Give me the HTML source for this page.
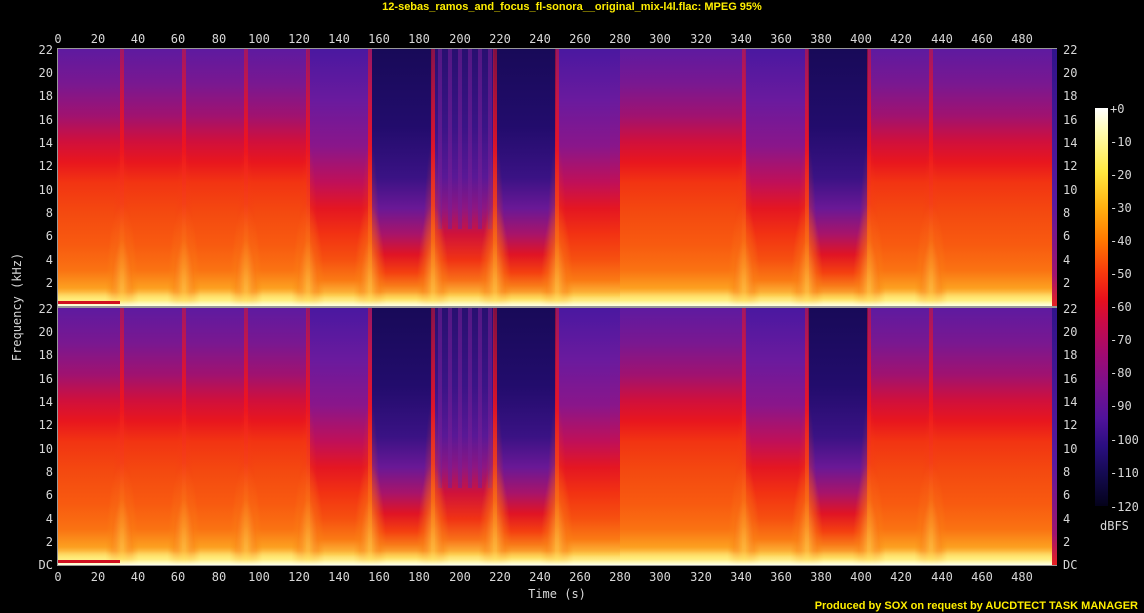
<!DOCTYPE html>
<html><head><meta charset="utf-8"><style>
html,body{margin:0;padding:0;background:#000;width:1144px;height:613px;overflow:hidden;position:relative;font-family:"DejaVu Sans Mono","Liberation Mono",monospace;}
.t{position:absolute;color:#d8d8d8;font-size:12px;line-height:12px;white-space:nowrap;}
.c{transform:translate(-50%,0);}
.r{transform:translate(-100%,-50%);}
.l{transform:translate(0,-50%);}
.ch{position:absolute;left:58px;width:999px;height:257px;overflow:hidden;background:#000;}
.seg{position:absolute;top:0;height:100%;}
</style></head><body>
<div style="position:absolute;top:1px;left:0;width:1144px;text-align:center;color:#ffee00;font:bold 11px 'Liberation Sans',sans-serif;">12-sebas_ramos_and_focus_fl-sonora__original_mix-l4l.flac: MPEG 95%</div>
<div style="position:absolute;top:48px;left:57px;width:1000px;height:518px;border:1px solid #999;background:#999;box-sizing:border-box;"></div>
<div class="ch" id="c1" style="top:49px"></div>
<div class="ch" id="c2" style="top:308px"></div>

<span class="t c" style="top:33px;left:58px">0</span><span class="t c" style="top:33px;left:98px">20</span><span class="t c" style="top:33px;left:138px">40</span><span class="t c" style="top:33px;left:178px">60</span><span class="t c" style="top:33px;left:219px">80</span><span class="t c" style="top:33px;left:259px">100</span><span class="t c" style="top:33px;left:299px">120</span><span class="t c" style="top:33px;left:339px">140</span><span class="t c" style="top:33px;left:379px">160</span><span class="t c" style="top:33px;left:419px">180</span><span class="t c" style="top:33px;left:460px">200</span><span class="t c" style="top:33px;left:500px">220</span><span class="t c" style="top:33px;left:540px">240</span><span class="t c" style="top:33px;left:580px">260</span><span class="t c" style="top:33px;left:620px">280</span><span class="t c" style="top:33px;left:660px">300</span><span class="t c" style="top:33px;left:701px">320</span><span class="t c" style="top:33px;left:741px">340</span><span class="t c" style="top:33px;left:781px">360</span><span class="t c" style="top:33px;left:821px">380</span><span class="t c" style="top:33px;left:861px">400</span><span class="t c" style="top:33px;left:901px">420</span><span class="t c" style="top:33px;left:942px">440</span><span class="t c" style="top:33px;left:982px">460</span><span class="t c" style="top:33px;left:1022px">480</span>
<span class="t c" style="top:571px;left:58px">0</span><span class="t c" style="top:571px;left:98px">20</span><span class="t c" style="top:571px;left:138px">40</span><span class="t c" style="top:571px;left:178px">60</span><span class="t c" style="top:571px;left:219px">80</span><span class="t c" style="top:571px;left:259px">100</span><span class="t c" style="top:571px;left:299px">120</span><span class="t c" style="top:571px;left:339px">140</span><span class="t c" style="top:571px;left:379px">160</span><span class="t c" style="top:571px;left:419px">180</span><span class="t c" style="top:571px;left:460px">200</span><span class="t c" style="top:571px;left:500px">220</span><span class="t c" style="top:571px;left:540px">240</span><span class="t c" style="top:571px;left:580px">260</span><span class="t c" style="top:571px;left:620px">280</span><span class="t c" style="top:571px;left:660px">300</span><span class="t c" style="top:571px;left:701px">320</span><span class="t c" style="top:571px;left:741px">340</span><span class="t c" style="top:571px;left:781px">360</span><span class="t c" style="top:571px;left:821px">380</span><span class="t c" style="top:571px;left:861px">400</span><span class="t c" style="top:571px;left:901px">420</span><span class="t c" style="top:571px;left:942px">440</span><span class="t c" style="top:571px;left:982px">460</span><span class="t c" style="top:571px;left:1022px">480</span>
<span class="t r" style="top:50px;left:53px">22</span><span class="t r" style="top:73px;left:53px">20</span><span class="t r" style="top:96px;left:53px">18</span><span class="t r" style="top:120px;left:53px">16</span><span class="t r" style="top:143px;left:53px">14</span><span class="t r" style="top:166px;left:53px">12</span><span class="t r" style="top:190px;left:53px">10</span><span class="t r" style="top:213px;left:53px">8</span><span class="t r" style="top:236px;left:53px">6</span><span class="t r" style="top:260px;left:53px">4</span><span class="t r" style="top:283px;left:53px">2</span>
<span class="t r" style="top:309px;left:53px">22</span><span class="t r" style="top:332px;left:53px">20</span><span class="t r" style="top:355px;left:53px">18</span><span class="t r" style="top:379px;left:53px">16</span><span class="t r" style="top:402px;left:53px">14</span><span class="t r" style="top:425px;left:53px">12</span><span class="t r" style="top:449px;left:53px">10</span><span class="t r" style="top:472px;left:53px">8</span><span class="t r" style="top:495px;left:53px">6</span><span class="t r" style="top:519px;left:53px">4</span><span class="t r" style="top:542px;left:53px">2</span><span class="t r" style="top:565px;left:53px">DC</span>
<span class="t l" style="top:50px;left:1063px">22</span><span class="t l" style="top:73px;left:1063px">20</span><span class="t l" style="top:96px;left:1063px">18</span><span class="t l" style="top:120px;left:1063px">16</span><span class="t l" style="top:143px;left:1063px">14</span><span class="t l" style="top:166px;left:1063px">12</span><span class="t l" style="top:190px;left:1063px">10</span><span class="t l" style="top:213px;left:1063px">8</span><span class="t l" style="top:236px;left:1063px">6</span><span class="t l" style="top:260px;left:1063px">4</span><span class="t l" style="top:283px;left:1063px">2</span>
<span class="t l" style="top:309px;left:1063px">22</span><span class="t l" style="top:332px;left:1063px">20</span><span class="t l" style="top:355px;left:1063px">18</span><span class="t l" style="top:379px;left:1063px">16</span><span class="t l" style="top:402px;left:1063px">14</span><span class="t l" style="top:425px;left:1063px">12</span><span class="t l" style="top:449px;left:1063px">10</span><span class="t l" style="top:472px;left:1063px">8</span><span class="t l" style="top:495px;left:1063px">6</span><span class="t l" style="top:519px;left:1063px">4</span><span class="t l" style="top:542px;left:1063px">2</span><span class="t l" style="top:565px;left:1063px">DC</span>

<span class="t c" style="top:588px;left:557px">Time (s)</span>
<span class="t" style="top:307px;left:17px;transform:translate(-50%,-50%) rotate(-90deg)">Frequency (kHz)</span>

<div style="position:absolute;left:1095px;top:108px;width:13px;height:398px;background:linear-gradient(#ffffff 0%,#fffbb0 6%,#ffe840 16%,#ffb010 25%,#ff7a00 33%,#f83c0c 41%,#e8101c 48%,#c80a48 54%,#a00a72 62%,#78108e 70%,#50129a 78%,#2a0e80 85%,#140a50 92%,#04021a 100%);"></div>
<span class="t l" style="top:109px;left:1110px">+0</span><span class="t l" style="top:142px;left:1110px">-10</span><span class="t l" style="top:175px;left:1110px">-20</span><span class="t l" style="top:208px;left:1110px">-30</span><span class="t l" style="top:241px;left:1110px">-40</span><span class="t l" style="top:274px;left:1110px">-50</span><span class="t l" style="top:307px;left:1110px">-60</span><span class="t l" style="top:340px;left:1110px">-70</span><span class="t l" style="top:373px;left:1110px">-80</span><span class="t l" style="top:406px;left:1110px">-90</span><span class="t l" style="top:440px;left:1110px">-100</span><span class="t l" style="top:473px;left:1110px">-110</span><span class="t l" style="top:507px;left:1110px">-120</span>
<span class="t" style="top:520px;left:1100px">dBFS</span>

<div style="position:absolute;bottom:1px;right:6px;color:#ffee00;font:bold 11px 'Liberation Sans',sans-serif;">Produced by SOX on request by AUCDTECT TASK MANAGER</div>

<script>
var G={
n:"linear-gradient(#5e1aa0 0%,#7a1890 14%,#a01270 26%,#d0103c 36%,#e8161e 44%,#f23412 52%,#f44a10 64%,#f85a10 76%,#fa7212 86%,#fca020 93%,#ffe070 97%,#fffff0 100%)",
s:"linear-gradient(#4a18a0 0%,#6a1a9e 20%,#8a168a 38%,#c01058 52%,#e41622 62%,#f23212 72%,#f65010 82%,#fa7a14 90%,#fdc040 96%,#fffff0 100%)",
q:"linear-gradient(#180a58 0%,#220c6c 30%,#3a1284 50%,#6a1896 62%,#a8146a 72%,#e01424 80%,#f44010 87%,#f87818 92%,#fdc040 97%,#fffff0 100%)",
m:"linear-gradient(#281070 0%,#3a1486 30%,#5a1896 50%,#8e1682 62%,#d0123a 72%,#f03214 82%,#f87018 90%,#fdc040 96%,#fffff0 100%)",
e:"linear-gradient(#30148a 0%,#5a1aa0 60%,#a01470 88%,#e82020 100%)"};
var segs=[[0,63,'n'],[63,249,'n'],[249,314,'s'],[314,374,'q'],[374,436,'m'],[436,498,'q'],[498,562,'s'],[562,687,'n'],[687,750,'s'],[750,810,'q'],[810,994,'n'],[994,999,'e']];
var tr=[63,125,187,249,311,374,436,498,685,748,810,872];
function build(el){
 var h='';
 segs.forEach(function(s){h+='<div class="seg" style="left:'+s[0]+'px;width:'+(s[1]-s[0])+'px;background:'+G[s[2]]+'"></div>';});
 h+='<div class="seg" style="left:380px;width:56px;height:70%;background:repeating-linear-gradient(90deg,rgba(120,30,150,.55) 0 4px,rgba(20,8,80,0) 4px 10px)"></div>';
 tr.forEach(function(x){
  h+='<div class="seg" style="left:'+(x-1)+'px;width:4px;background:linear-gradient(rgba(230,20,40,.5),rgba(240,20,30,.9) 40%,rgba(250,120,20,.9) 85%,#ffe080)"></div>';
  h+='<div class="seg" style="left:'+(x-10)+'px;width:22px;top:0;height:100%;background:radial-gradient(ellipse 50% 65% at 50% 100%,rgba(250,110,20,.65),rgba(245,60,20,.35) 55%,rgba(240,40,20,0) 100%)"></div>';
  h+='<div class="seg" style="left:'+(x-16)+'px;width:34px;top:60%;height:40%;background:radial-gradient(ellipse at 50% 100%,rgba(255,210,70,.8),rgba(250,130,20,.4) 45%,rgba(240,60,20,0) 70%)"></div>';
 });
 h+='<div class="seg" style="left:0;width:999px;top:243px;height:14px;background:linear-gradient(rgba(255,220,80,0),rgba(255,240,120,.7) 60%,#ffffe0)"></div>';
 h+='<div class="seg" style="left:0;width:62px;top:252px;height:3px;background:#d01020"></div>';
 h+='<div class="seg" style="left:994px;width:5px;background:'+G.e+'"></div>';
 el.innerHTML=h;
}
build(document.getElementById('c1'));build(document.getElementById('c2'));
</script>
</body></html>
